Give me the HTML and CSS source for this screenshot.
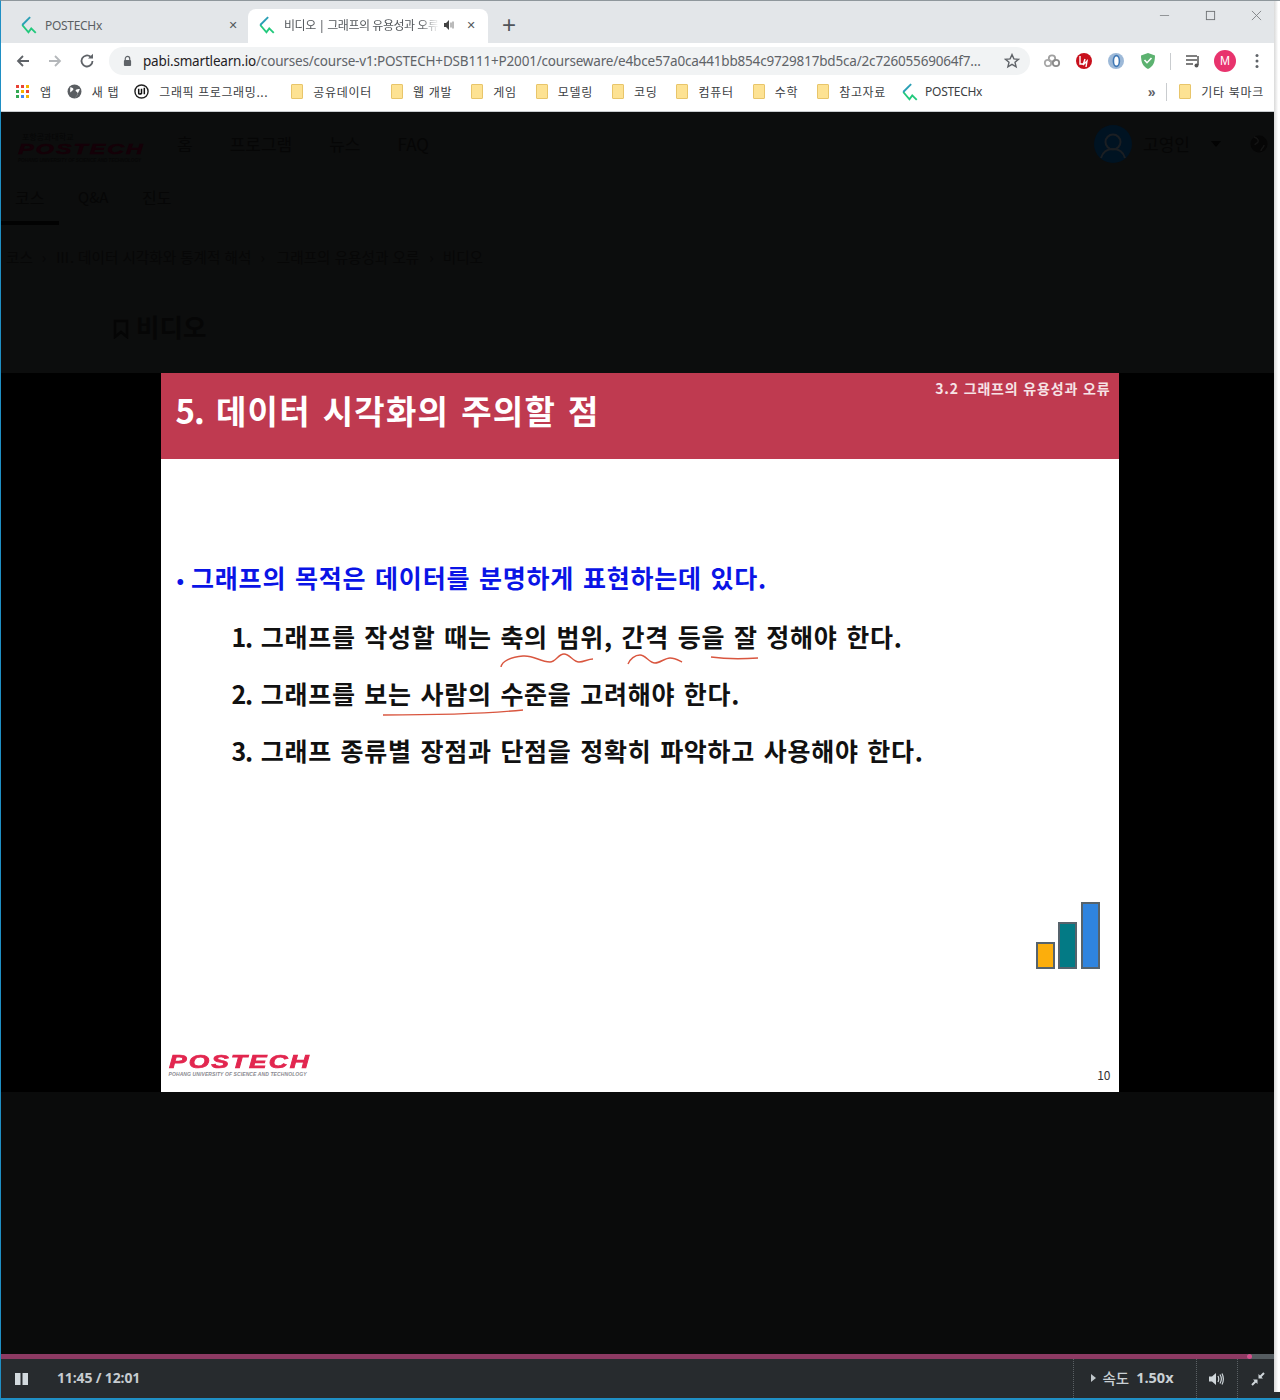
FILE: index.html
```html
<!DOCTYPE html>
<html lang="ko">
<head>
<meta charset="utf-8">
<title>비디오 | 그래프의 유용성과 오류</title>
<link rel="stylesheet" href="styles.css">
</head>
<body>
<div class="window">
  <div class="tabstrip">
    <div class="tab">
      <svg class="favicon" viewBox="0 0 16 16"><path d="M2 8 7.500 14.500 10 11l4 4" fill="none" stroke="#22c97c" stroke-width="1.700"/><path d="M9 1 2 8" fill="none" stroke="#2a9fb5" stroke-width="1.700"/></svg>
      <span class="tab-title">POSTECHx</span>
      <span class="tab-close">✕</span>
    </div>
    <div class="tab active">
      <svg class="favicon" viewBox="0 0 16 16"><path d="M2 8 7.500 14.500 10 11l4 4" fill="none" stroke="#22c97c" stroke-width="1.700"/><path d="M9 1 2 8" fill="none" stroke="#2a9fb5" stroke-width="1.700"/></svg>
      <span class="tab-title fade">비디오 | 그래프의 유용성과 오류</span>
      <svg class="tab-sound" viewBox="0 0 12 12"><path d="M1 4h2l3-3v10L3 8H1z" fill="#444"/><path d="M8 3.500v5M10 2.500v7" stroke="#777" stroke-width="1"/></svg>
      <span class="tab-close">✕</span>
    </div>
    <div class="newtab">+</div>
    <div class="winctl">
      <svg viewBox="0 0 12 12"><path d="M1 6h10" stroke="#8a8d90"/></svg>
      <svg viewBox="0 0 12 12"><rect x="1.500" y="1.500" width="9" height="9" fill="none" stroke="#6f7275"/></svg>
      <svg viewBox="0 0 12 12"><path d="M1 1l10 10M11 1 1 11" stroke="#7f8285"/></svg>
    </div>
  </div>

  <div class="toolbar">
    <svg class="navicon" viewBox="0 0 16 16"><path d="M14 8H3M8 3 3 8l5 5" fill="none" stroke="#5f6368" stroke-width="1.800"/></svg>
    <svg class="navicon" viewBox="0 0 16 16"><path d="M2 8h11M8 3l5 5-5 5" fill="none" stroke="#b4b7ba" stroke-width="1.800"/></svg>
    <svg class="navicon" viewBox="0 0 16 16"><path d="M13.500 8A5.500 5.500 0 1 1 11.600 3.800" fill="none" stroke="#5f6368" stroke-width="1.800"/><path d="M9 5.600h5V.8z" fill="#5f6368"/></svg>
    <div class="omnibox">
      <svg class="lock" viewBox="0 0 10 12"><path d="M2.500 5V3.400a2.500 2.500 0 0 1 5 0V5" fill="none" stroke="#5f6368" stroke-width="1.300"/><rect x="1" y="5" width="8" height="6.500" rx="1" fill="#5f6368"/></svg>
      <span class="url"><b>pabi.smartlearn.io</b>/courses/course-v1:POSTECH+DSB111+P2001/courseware/e4bce57a0ca441bb854c9729817bd5ca/2c72605569064f7...</span>
      <svg class="star" viewBox="0 0 16 16"><path d="m8 1.600 1.900 4.300 4.600.4-3.500 3 1.100 4.600L8 11.400l-4.100 2.500L5 9.300l-3.500-3 4.600-.4z" fill="none" stroke="#5f6368" stroke-width="1.400"/></svg>
    </div>
    <div class="exts">
      <svg class="ext" viewBox="0 0 18 18"><circle cx="9" cy="6.500" r="3.200" fill="none" stroke="#a0a0a0" stroke-width="1.800"/><circle cx="5" cy="11" r="3.200" fill="none" stroke="#a8a8a8" stroke-width="1.800"/><circle cx="13" cy="11" r="3.200" fill="none" stroke="#8b8b8b" stroke-width="1.800"/></svg>
      <svg class="ext" viewBox="0 0 18 18"><circle cx="9" cy="9" r="8" fill="#c8101c"/><path d="M5 4v8h3M10 7l-2 6 4-4-1 6" fill="none" stroke="#fff" stroke-width="1.400"/></svg>
      <svg class="ext" viewBox="0 0 18 18"><circle cx="9" cy="9" r="8" fill="#9db9d8"/><ellipse cx="9.400" cy="9" rx="3" ry="5.400" fill="#fff" stroke="#3f78b5" stroke-width="1.600"/></svg>
      <svg class="ext last" viewBox="0 0 18 18"><path d="M9 1 2 3.400c0 7 2 10.800 7 13.600 5-2.800 7-6.600 7-13.600z" fill="#5cb270"/><path d="m5.500 8 2.500 2.700 4.500-4.700" fill="none" stroke="#fff" stroke-width="1.600"/></svg>
      <i class="vsep"></i>
      <svg class="ext" viewBox="0 0 18 18"><path d="M2 4h11M2 8h11M2 12h7" stroke="#555" stroke-width="1.500"/><path d="M14 4v9" stroke="#555" stroke-width="1.500"/><circle cx="12.500" cy="13.500" r="2" fill="#555"/></svg>
      <span class="avatar">M</span>
      <svg class="menu-dots" viewBox="0 0 4 16"><circle cx="2" cy="2.500" r="1.500" fill="#5f6368"/><circle cx="2" cy="8" r="1.500" fill="#5f6368"/><circle cx="2" cy="13.500" r="1.500" fill="#5f6368"/></svg>
    </div>
  </div>

  <div class="bookmarks">
    <span class="bm tight"><svg class="apps" viewBox="0 0 14 14"><g><rect x="0" y="0" width="3" height="3" fill="#e94235"/><rect x="5" y="0" width="3" height="3" fill="#e94235"/><rect x="10" y="0" width="3" height="3" fill="#f4b400"/><rect x="0" y="5" width="3" height="3" fill="#34a853"/><rect x="5" y="5" width="3" height="3" fill="#f4b400"/><rect x="10" y="5" width="3" height="3" fill="#e94235"/><rect x="0" y="10" width="3" height="3" fill="#34a853"/><rect x="5" y="10" width="3" height="3" fill="#4285f4"/><rect x="10" y="10" width="3" height="3" fill="#f4b400"/></g></svg>앱</span>
    <span class="bm tight"><svg class="bmicon" viewBox="0 0 14 14"><circle cx="7" cy="7" r="6.500" fill="#5a5e62"/><path d="M3 3c2 0 3 1 3 2S4 7 3 8M8 13c0-2 2-2 2-4S8 7 8 6s3-2 4-1" fill="#fff"/></svg>새 탭</span>
    <span class="bm wide-gap"><svg class="bmicon" viewBox="0 0 16 16"><circle cx="8" cy="8" r="7" fill="#fff" stroke="#222" stroke-width="1.500"/><path d="M5 5v5c0 1 2 1 3 0V5M8 10V5M11 4v7" fill="none" stroke="#111" stroke-width="1.600"/></svg>그래픽 프로그래밍...</span>
    <span class="bm"><i class="folder"></i>공유데이터</span>
    <span class="bm"><i class="folder"></i>웹 개발</span>
    <span class="bm"><i class="folder"></i>게임</span>
    <span class="bm"><i class="folder"></i>모델링</span>
    <span class="bm"><i class="folder"></i>코딩</span>
    <span class="bm"><i class="folder"></i>컴퓨터</span>
    <span class="bm"><i class="folder"></i>수학</span>
    <span class="bm tight"><i class="folder"></i>참고자료</span>
    <span class="bm"><svg class="bmicon wide" viewBox="0 0 16 16"><path d="M2 8 7.500 14.500 10 11l4 4" fill="none" stroke="#22c97c" stroke-width="1.700"/><path d="M9 1 2 8" fill="none" stroke="#2a9fb5" stroke-width="1.700"/></svg><span class="latin">POSTECHx</span></span>
    <span class="bm-end">
      <span class="chev">»</span>
      <i class="vsep short"></i>
      <span class="bm"><i class="folder"></i>기타 북마크</span>
    </span>
  </div>

  <div class="page">
    <div class="dim-area">
      <div class="site-head">
        <div class="site-logo">
          <span class="logo-top">포항공과대학교</span>
          <span class="logo-word">POSTECH</span>
          <span class="logo-sub">POHANG UNIVERSITY OF SCIENCE AND TECHNOLOGY</span>
        </div>
        <nav class="site-nav"><span>홈</span><span>프로그램</span><span>뉴스</span><span>FAQ</span></nav>
        <div class="site-user">
          <svg class="user-pic" viewBox="0 0 38 38"><circle cx="19" cy="19" r="19" fill="#001322"/><circle cx="19" cy="17" r="7.500" fill="none" stroke="#1b1f23" stroke-width="2"/><path d="M7 33c2-7 6-9 12-9s10 2 12 9" fill="none" stroke="#1b1f23" stroke-width="2"/></svg>
          <span class="user-name">고영인</span>
          <i class="caret"></i>
          <svg class="globe" viewBox="0 0 18 18"><circle cx="9" cy="9" r="8.500" fill="#060606"/><path d="M4 2c3 1 5 3 4 5s-3 1-3 3M11 16c0-3 3-3 3-6" stroke="#141414" stroke-width="1.500" fill="none"/></svg>
        </div>
      </div>
      <div class="course-tabs">
        <span class="ctab on">코스</span><span class="ctab qa">Q&amp;A</span><span class="ctab">진도</span>
      </div>
      <div class="crumbs">
        <span>코스</span><i>›</i><span>Ⅲ. 데이터 시각화와 통계적 해석</span><i>›</i><span class="crumb-far">그래프의 유용성과 오류</span><i>›</i><span>비디오</span>
      </div>
      <div class="unit-title">
        <svg class="bookmark" viewBox="0 0 16 20"><path d="M2 2h12v16l-6-5-6 5z" fill="none" stroke="#050505" stroke-width="2.500"/></svg>
        <h1>비디오</h1>
      </div>
    </div>

    <div class="player">
      <div class="stage">
        <div class="slide-row">
          <div class="slide">
            <div class="slide-head">
              <h2><span class="num">5.</span> 데이터 시각화의 주의할 점</h2>
              <span class="section">3.2 그래프의 유용성과 오류</span>
            </div>
            <div class="slide-body">
              <p class="lead"><span class="dot">•</span>그래프의 목적은 데이터를 분명하게 표현하는데 있다.</p>
              <ol class="points">
                <li><span class="num">1.</span> 그래프를 작성할 때는 축의 범위, 간격 등을 잘 정해야 한다.</li>
                <li><span class="num">2.</span> 그래프를 보는 사람의 수준을 고려해야 한다.</li>
                <li><span class="num">3.</span> 그래프 종류별 장점과 단점을 정확히 파악하고 사용해야 한다.</li>
              </ol>
            </div>
            <svg class="marks" viewBox="0 0 958 719">
              <path d="M340 294c1-6 10-10 22-11 11-1 17 6 27 6 6 0 8-8 14-8 6 0 9 8 15 8 5 0 9-3 14-3" />
              <path d="M467 291c2-5 7-9 12-9 6 0 9 8 15 8 5 0 10-5 15-5 5 0 8 2 12 4" />
              <path d="M550 284c14 2 32 2 47 1" />
              <path d="M222 342c48 0 100-1 140-5" />
            </svg>
            <div class="bars">
              <i class="bar b1"></i><i class="bar b2"></i><i class="bar b3"></i>
            </div>
            <div class="slide-foot">
              <div class="foot-logo">
                <span class="foot-word">POSTECH</span>
                <span class="foot-sub">POHANG UNIVERSITY OF SCIENCE AND TECHNOLOGY</span>
              </div>
              <span class="page-no">10</span>
            </div>
          </div>
        </div>
      </div>
      <div class="controls">
        <div class="progress"><i class="played"></i><i class="knob"></i></div>
        <div class="ctl-row">
          <svg class="pause" viewBox="0 0 13 12"><rect width="5.500" height="12" fill="#d3dade"/><rect x="7.500" width="5.500" height="12" fill="#d3dade"/></svg>
          <span class="time">11:45 / 12:01</span>
          <div class="ctl-right">
            <div class="cell speed"><i class="tri"></i><span class="sp-label">속도</span><b>1.50x</b></div>
            <div class="cell vol"><svg viewBox="0 0 16 14"><path d="M1 4.500h3L8 1v12L4 9.500H1z" fill="#cfd6da"/><path d="M10 4c1 2 1 4 0 6M12 2.500c1.800 3 1.800 6 0 9M14 1.500c2 4 2 7 0 11" fill="none" stroke="#cfd6da" stroke-width="1.200"/></svg></div>
            <div class="cell full"><svg viewBox="0 0 14 14"><path d="M1 13l4.500-4.500M8.500 5.500 13 1" stroke="#cfd6da" stroke-width="2"/><path d="M2 7.500h4.500V12zM12 6.500H7.500V2z" fill="#cfd6da"/></svg></div>
          </div>
        </div>
      </div>
    </div>
  </div>
  <div class="shadow"></div>
</div>
</body>
</html>
```

FILE: styles.css
```css
* { box-sizing: border-box; }
html, body { margin: 0; padding: 0; }
body { font-family: "Noto Sans CJK KR", "Noto Sans", sans-serif; background: #fff; overflow: hidden; }
.window { position: relative; width: 1280px; height: 1400px; display: flex; flex-direction: column; border-left: 1px solid #1f8fc4; border-top: 1px solid #8f979c; border-bottom: 2px solid #1f8fc4; padding-right: 6px; background: #fff; }
.shadow { position: absolute; top: 0; right: 0; bottom: 6px; width: 6px; background: linear-gradient(90deg, #d9d9d9, #fff 70%); }

/* tabs */
.tabstrip { height: 42px; background: #e3e6e9; display: flex; align-items: flex-end; padding-left: 8px; flex: none; }
.tab { position: relative; width: 241px; height: 34px; display: flex; align-items: center; padding: 0 10px 2px 11px; font-size: 12px; color: #5b5f63; }
.tab.active { background: #fff; border-radius: 8px 8px 0 0; color: #55595d; margin-left: -2px; width: 240px; padding: 0 10px 2px 10px; }
.favicon { width: 18px; height: 18px; flex: none; margin-right: 7px; }
.tab.active .favicon { margin-right: 8px; }
.tab-title { flex: 1; white-space: nowrap; overflow: hidden; letter-spacing: -.3px; font-family: "Noto Sans", "Noto Sans CJK KR", sans-serif; }
.tab-title.fade { letter-spacing: -.45px; -webkit-mask-image: linear-gradient(90deg, #000 88%, transparent); mask-image: linear-gradient(90deg, #000 88%, transparent); }
.tab-sound { width: 12px; height: 12px; flex: none; margin: 0 9px 0 4px; }
.tab-close { font-size: 11px; color: #55595d; width: 14px; text-align: center; flex: none; font-family: "DejaVu Sans", sans-serif; }
.newtab { width: 22px; height: 34px; margin-left: 10px; font: 300 24px/32px "Liberation Sans", sans-serif; color: #50545a; text-align: center; }
.winctl { margin-left: auto; align-self: flex-start; display: flex; gap: 35px; padding: 9px 12px 0 0; }
.winctl svg { width: 11px; height: 11px; display: block; }

/* toolbar */
.toolbar { height: 38px; display: flex; align-items: center; padding: 0 0 2px 14px; background: #fff; flex: none; }
.navicon { width: 16px; height: 16px; margin-right: 16px; flex: none; }
.omnibox { width: 921px; height: 28px; margin-left: -2px; background: #f1f3f4; border-radius: 14px; display: flex; align-items: center; padding: 0 10px 0 14px; flex: none; }
.lock { width: 9px; height: 12px; margin-right: 11px; flex: none; }
.url { flex: 1; font: 13.500px/20px "Noto Sans", sans-serif; color: #5f6368; white-space: nowrap; overflow: hidden; letter-spacing: -.18px; }
.url b { font-weight: 400; color: #1f2124; }
.star { width: 16px; height: 16px; flex: none; margin-left: 5px; }
.exts { display: flex; align-items: center; margin-left: 13px; }
.ext { width: 18px; height: 18px; margin-right: 14px; flex: none; }
.ext.last { margin-right: 12px; }
.vsep { width: 1px; height: 17px; background: #c9cccf; margin: 0 13px 0 1px; flex: none; }
.avatar { width: 22px; height: 22px; border-radius: 50%; background: #e8336d; color: #fff; font: 12px/22px "Liberation Sans", sans-serif; text-align: center; margin: 0 19px 0 -2px; flex: none; }
.menu-dots { width: 4px; height: 16px; flex: none; }

/* bookmarks */
.bookmarks { height: 30px; display: flex; align-items: center; padding: 0 0 9px 15px; font-size: 12px; letter-spacing: .7px; color: #3c4043; background: #fff; flex: none; }
.bm { display: inline-flex; align-items: center; white-space: nowrap; margin-right: 19px; }
.bm.tight { margin-right: 15px; }
.bm.wide-gap { margin-right: 23px; letter-spacing: .6px; }
.apps { width: 14px; height: 14px; margin-right: 10px; }
.bmicon { width: 15px; height: 15px; margin-right: 10px; }
.bmicon.wide { width: 18px; height: 18px; margin-right: 6px; }
.latin { letter-spacing: -.3px; font-family: "Noto Sans", sans-serif; }
.folder { width: 12px; height: 15px; margin-right: 10px; background: #fde293; border: 1px solid #e8c56a; border-radius: 1px; flex: none; }
.bm-end { margin-left: auto; display: flex; align-items: center; margin-right: 10px; }
.bm-end .bm { margin-right: 0; margin-left: 0; }
.chev { font: 700 14px "Liberation Sans", sans-serif; color: #5f6368; margin-right: 5px; }
.vsep.short { height: 18px; margin: 0 12px 0 5px; }

/* dimmed page */
.page { flex: 1; min-height: 0; background: #0c0d0d; border-top: 1px solid #c9cccf; display: flex; flex-direction: column; color: #050505; margin-right: -6px; }
.dim-area { height: 261px; flex: none; }
.site-head { height: 73px; display: flex; align-items: center; padding: 0 0 10px 17px; }
.site-logo { width: 126px; margin: 8px 86px 0 0; display: flex; flex-direction: column; flex: none; }
.logo-top { font-size: 8px; line-height: 10px; padding-left: 4px; color: #060606; }
.logo-word { display: block; font: italic 900 15.500px/14px "Liberation Sans", sans-serif; color: #150008; letter-spacing: 1.200px; transform: scaleX(1.520); transform-origin: left; -webkit-text-stroke: .5px #150008; white-space: nowrap; }
.logo-sub { font: italic 700 4.600px/7px "Liberation Sans", sans-serif; color: #070707; white-space: nowrap; margin-top: 1px; }
.site-nav { display: flex; margin-left: -53px; font-size: 17px; color: #060606; gap: 37px; line-height: 24px; }
.site-user { margin-left: auto; display: flex; align-items: center; padding-right: 12px; }
.user-pic { width: 38px; height: 38px; margin-right: 11px; }
.user-name { font-size: 17px; color: #060606; width: 68px; line-height: 24px; }
.caret { width: 0; height: 0; border: 5px solid transparent; border-top: 6px solid #030303; border-bottom: 0; margin-right: 29px; }
.globe { width: 18px; height: 18px; }
.course-tabs { height: 40px; display: flex; }
.ctab { font-size: 16px; line-height: 24px; color: #060606; width: 58px; height: 40px; padding: 0 0 0 14px; }
.ctab.on { border-bottom: 4px solid #020202; }
.ctab + .ctab { width: 64px; padding-left: 19px; }
.ctab.qa { font-size: 15px; }
.crumbs { display: flex; align-items: center; gap: 9px; height: 34px; margin-top: 14px; padding-left: 5px; font-size: 14.600px; color: #070707; white-space: nowrap; }
.crumbs i { font-style: normal; }
.crumb-far { margin: 0 1px 0 3px; }
.unit-title { display: flex; align-items: center; padding: 37px 0 0 112px; }
.bookmark { width: 16px; height: 20px; margin-top: 6px; }
h1 { margin: 0 0 0 7px; font-size: 25.500px; font-weight: 700; line-height: 32px; color: #060606; }

/* player */
.player { flex: 1; min-height: 0; display: flex; flex-direction: column; }
.stage { flex: 1; min-height: 0; background: #0a0b0b; }
.slide-row { height: 719px; background: #000; display: flex; justify-content: center; padding-right: 2px; }
.slide { position: relative; width: 958px; height: 719px; background: #fff; display: flex; flex-direction: column; flex: none; }
.slide-head { height: 86px; background: #bf3a50; color: #fff; display: flex; justify-content: space-between; flex: none; padding: 0 8px 0 15px; }
.slide-head h2 { margin: 13px 0 0; font-size: 33px; line-height: 48px; font-weight: 700; word-spacing: 1.500px; letter-spacing: 1.250px; white-space: nowrap; }
.slide-head .num { letter-spacing: -.9px; }
.section { font-size: 14px; font-weight: 700; padding-top: 5px; line-height: 20px; color: #f6e3e6; letter-spacing: .85px; white-space: nowrap; }
.slide-body { flex: 1; padding: 100px 0 0 16px; }
.lead { margin: 0; color: #0a14e6; font-size: 25px; font-weight: 700; line-height: 36px; word-spacing: 1px; letter-spacing: .78px; white-space: nowrap; }
.dot { font-size: 20px; margin-right: 7px; letter-spacing: 0; }
.points { list-style: none; margin: 20px 0 0 55px; padding: 0; color: #111; font-size: 25px; font-weight: 700; line-height: 36px; word-spacing: 1px; letter-spacing: .72px; }
.points .num { letter-spacing: -1.200px; }
.points li { margin-bottom: 21px; white-space: nowrap; }
.marks { position: absolute; inset: 0; width: 958px; height: 719px; pointer-events: none; }
.marks path { fill: none; stroke: #d9563f; stroke-width: 1.400; }
.bars { position: absolute; left: 875px; top: 528px; width: 65px; height: 68px; display: flex; align-items: flex-end; gap: 3px; }
.bar { display: block; width: 19px; border: 2px solid #56636c; }
.b1 { height: 27px; background: #fcae0c; }
.b2 { height: 47px; background: #037a85; }
.b3 { height: 67px; background: #2f84df; margin-left: 1px; }
.slide-foot { position: absolute; left: 0; right: 0; bottom: 0; display: flex; justify-content: space-between; align-items: flex-end; padding: 0 8px 14px 8px; }
.foot-logo { display: flex; flex-direction: column; width: 145px; }
.foot-word { font: italic 900 18px/18px "Liberation Sans", sans-serif; color: #e2264f; letter-spacing: 1.400px; transform: scaleX(1.465); transform-origin: left; -webkit-text-stroke: .7px #e2264f; white-space: nowrap; }
.foot-sub { font: italic 700 5px/7px "Liberation Sans", sans-serif; color: #8a8a90; white-space: nowrap; letter-spacing: .1px; }
.page-no { font-size: 12px; line-height: 16px; color: #333; margin-bottom: -5px; }

/* controls */
.controls { height: 44px; flex: none; background: #272b2e; }
.progress { position: relative; height: 5px; background: #555c60; margin-right: 6px; }
.played { position: absolute; left: 0; top: 0; bottom: 0; width: 97.900%; background: #8d3a63; }
.knob { position: absolute; top: 0; left: 1246px; width: 5px; height: 5px; border-radius: 50%; background: #d64f8c; }
.ctl-row { height: 39px; display: flex; align-items: center; padding: 0 6px 0 14px; }
.pause { width: 13px; height: 12px; margin-right: 29px; flex: none; }
.time { font: 700 14px "Open Sans", sans-serif; color: #c6ccd0; margin-bottom: 2px; letter-spacing: -.15px; }
.ctl-right { margin-left: auto; display: flex; height: 39px; }
.cell { height: 39px; border-left: 1px dotted #5a6064; display: flex; align-items: center; justify-content: center; color: #c9d0d4; }
.speed { width: 123px; padding: 0 5px 2px 0; font-size: 14.500px; }
.tri { width: 0; height: 0; border: 4px solid transparent; border-left: 5px solid #bfc6ca; border-right: 0; margin-right: 6px; }
.sp-label { font-weight: 500; margin-right: 7px; }
.speed b { font: 700 14.500px "Open Sans", sans-serif; }
.vol { width: 41px; padding-right: 2px; }
.vol svg { width: 16px; height: 14px; }
.full { width: 37px; padding-left: 4px; }
.full svg { width: 14px; height: 14px; }
```
